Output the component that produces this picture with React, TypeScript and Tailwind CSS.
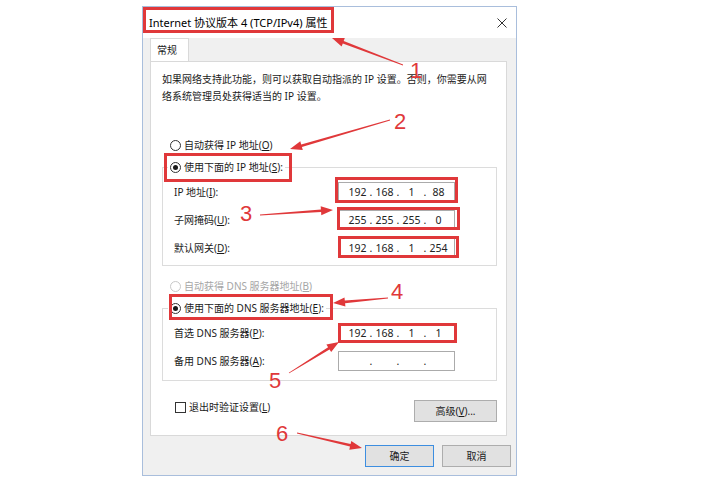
import React from 'react';

type Pt = [number, number];

// tapered arrow: thin tail, wider near the head, triangular head
function arrowPoints(tail: Pt, tip: Pt) {
	const [x1, y1] = tail;
	const [x2, y2] = tip;
	const len = Math.hypot(x2 - x1, y2 - y1);
	const dx = (x2 - x1) / len;
	const dy = (y2 - y1) / len;
	const nx = -dy;
	const ny = dx;
	const head = 12;
	const bx = x2 - dx * head;
	const by = y2 - dy * head;
	const pts: Pt[] = [
		[x1 + nx * 0.4, y1 + ny * 0.4],
		[bx + nx * 1.3, by + ny * 1.3],
		[bx + nx * 4.5, by + ny * 4.5],
		[x2, y2],
		[bx - nx * 4.5, by - ny * 4.5],
		[bx - nx * 1.3, by - ny * 1.3],
		[x1 - nx * 0.4, y1 - ny * 0.4],
	];
	return pts.map((p) => `${p[0].toFixed(1)},${p[1].toFixed(1)}`).join(' ');
}

const arrows: [Pt, Pt][] = [
	[[403, 65], [332, 38]],
	[[390, 120], [290, 149]],
	[[260, 215], [333, 210]],
	[[388, 298], [333, 303]],
	[[289, 373], [339, 342]],
	[[297, 433], [362, 448]],
];

const boxes = [
	{ x: 144.5, y: 8.5, w: 188, h: 23 },
	{ x: 165.5, y: 154.5, w: 125, h: 26 },
	{ x: 336.5, y: 178.5, w: 120, h: 23 },
	{ x: 338.5, y: 208.5, w: 120, h: 20 },
	{ x: 339.5, y: 237.5, w: 118, h: 19 },
	{ x: 170.5, y: 295.5, w: 161, h: 23 },
	{ x: 339.5, y: 324.5, w: 116, h: 17 },
];

const Radio: React.FC<{ checked?: boolean; disabled?: boolean }> = ({ checked, disabled }) => (
	<span
		className={`flex h-[11px] w-[11px] shrink-0 items-center justify-center rounded-full border bg-white ${
			disabled ? 'border-[#c8c8c8]' : 'border-[#333333]'
		}`}
	>
		{checked && <span className="h-[5px] w-[5px] rounded-full bg-[#1a1a1a]" />}
	</span>
);

const IpBox: React.FC<{ parts: string[] }> = ({ parts }) => (
	<div className="flex h-[20px] w-[117px] items-center border border-[#ababab] bg-white pl-[8px] text-[10.5px] text-[#222222]">
		{parts.map((p, i) => (
			<React.Fragment key={i}>
				{i > 0 && <span className="w-[6px] text-center">.</span>}
				<span className="w-[21px] text-center">{p}</span>
			</React.Fragment>
		))}
	</div>
);

const Row: React.FC<{ label: React.ReactNode; parts: string[] }> = ({ label, parts }) => (
	<div className="flex h-[20px] items-center">
		<span className="w-[164px]">{label}</span>
		<IpBox parts={parts} />
	</div>
);

const Key: React.FC<{ k: string }> = ({ k }) => (
	<>
		(<span className="underline">{k}</span>)
	</>
);

export default function App() {
	return (
		<div className="relative h-[481px] w-[720px] overflow-hidden bg-white font-['Noto_Sans','Noto_Sans_CJK_SC',sans-serif] text-[10px] leading-[14px] text-[#1a1a1a]">
			<div className="ml-[142px] mt-[6px] flex h-[470px] w-[375px] flex-col border border-[#a9bedc] bg-[#f0f0f0]">
				{/* Title bar */}
				<div className="flex h-[31px] items-center justify-between bg-white pl-[6px] pr-[8px]">
					<span className="text-[11px] text-black">Internet 协议版本 4 (TCP/IPv4) 属性</span>
					<svg width="10" height="10" viewBox="0 0 10 10" className="mr-[1px]">
						<path d="M0.5 0.5 L9.5 9.5 M9.5 0.5 L0.5 9.5" stroke="#333" strokeWidth="1" />
					</svg>
				</div>

				{/* Tab */}
				<div className="ml-[7px] flex h-[23px] w-[39px] items-center border border-b-0 border-[#d9d9d9] bg-white pl-[6px]">
					常规
				</div>

				{/* Tab panel */}
				<div className="ml-[7px] flex w-[357px] flex-col border border-[#d9d9d9] bg-white pb-[13px] pl-[11px] pr-[9px] pt-[9px]">
					<p className="leading-[17px]">
						如果网络支持此功能，则可以获取自动指派的 IP 设置。否则，你需要从网
						<br />
						络系统管理员处获得适当的 IP 设置。
					</p>

					<label className="mt-[33px] flex items-center gap-[3px] pl-[8px]">
						<Radio />
						<span>
							自动获得 IP 地址<Key k="O" />
						</span>
					</label>

					<fieldset className="mt-[8px] border border-[#dcdcdc] px-[11px] pb-[7px]">
						<legend className="-ml-[6px] flex items-center gap-[3px] bg-white px-[2px]">
							<Radio checked />
							<span>
								使用下面的 IP 地址<Key k="S" />:
							</span>
						</legend>
						<div className="flex flex-col gap-[8px] pt-[8px]">
							<Row label={<>IP 地址<Key k="I" />:</>} parts={['192', '168', '1', '88']} />
							<Row label={<>子网掩码<Key k="U" />:</>} parts={['255', '255', '255', '0']} />
							<Row label={<>默认网关<Key k="D" />:</>} parts={['192', '168', '1', '254']} />
						</div>
					</fieldset>

					<label className="mt-[13px] flex items-center gap-[3px] pl-[8px] text-[#a6a6a6]">
						<Radio disabled />
						<span>
							自动获得 DNS 服务器地址<Key k="B" />
						</span>
					</label>

					<fieldset className="mt-[8px] border border-[#dcdcdc] px-[11px] pb-[9px]">
						<legend className="-ml-[6px] flex items-center gap-[3px] bg-white px-[2px]">
							<Radio checked />
							<span>
								使用下面的 DNS 服务器地址<Key k="E" />:
							</span>
						</legend>
						<div className="flex flex-col gap-[8px] pt-[8px]">
							<Row label={<>首选 DNS 服务器<Key k="P" />:</>} parts={['192', '168', '1', '1']} />
							<Row label={<>备用 DNS 服务器<Key k="A" />:</>} parts={['', '', '', '']} />
						</div>
					</fieldset>

					<div className="mt-[19px] flex items-start justify-between">
						<label className="flex items-center gap-[3px] pl-[13px]">
							<span className="h-[11px] w-[11px] border border-[#333333] bg-white" />
							<span>
								退出时验证设置<Key k="L" />
							</span>
						</label>
						<button className="flex h-[22px] w-[83px] items-center justify-center border border-[#adadad] bg-[#e1e1e1]">
							高级<Key k="V" />...
						</button>
					</div>
				</div>

				{/* Footer buttons */}
				<div className="mt-[9px] flex justify-end gap-[8px] pr-[5px]">
					<button className="flex h-[22px] w-[69px] items-center justify-center border-[1.5px] border-[#3d8ee0] bg-[#e1e1e1]">
						确定
					</button>
					<button className="flex h-[22px] w-[69px] items-center justify-center border border-[#adadad] bg-[#e1e1e1]">
						取消
					</button>
				</div>
			</div>

			{/* Red annotations */}
			<svg className="pointer-events-none absolute inset-0" width="720" height="481">
				{boxes.map((b, i) => (
					<rect key={i} x={b.x} y={b.y} width={b.w} height={b.h} fill="none" stroke="#e0383a" strokeWidth="3" />
				))}
				{arrows.map(([a, b], i) => (
					<polygon key={i} points={arrowPoints(a, b)} fill="#e0383a" />
				))}
			</svg>
			<span className="absolute left-[410px] top-[63px] font-['Liberation_Sans',sans-serif] text-[22px] leading-[16px] text-[#e0383a]">1</span>
			<span className="absolute left-[394px] top-[111px] font-['Liberation_Sans',sans-serif] text-[22px] leading-none text-[#e0383a]">2</span>
			<span className="absolute left-[240px] top-[203px] font-['Liberation_Sans',sans-serif] text-[22px] leading-none text-[#e0383a]">3</span>
			<span className="absolute left-[391px] top-[281px] font-['Liberation_Sans',sans-serif] text-[22px] leading-none text-[#e0383a]">4</span>
			<span className="absolute left-[269px] top-[370px] font-['Liberation_Sans',sans-serif] text-[22px] leading-none text-[#e0383a]">5</span>
			<span className="absolute left-[276px] top-[423px] font-['Liberation_Sans',sans-serif] text-[22px] leading-none text-[#e0383a]">6</span>
		</div>
	);
}
